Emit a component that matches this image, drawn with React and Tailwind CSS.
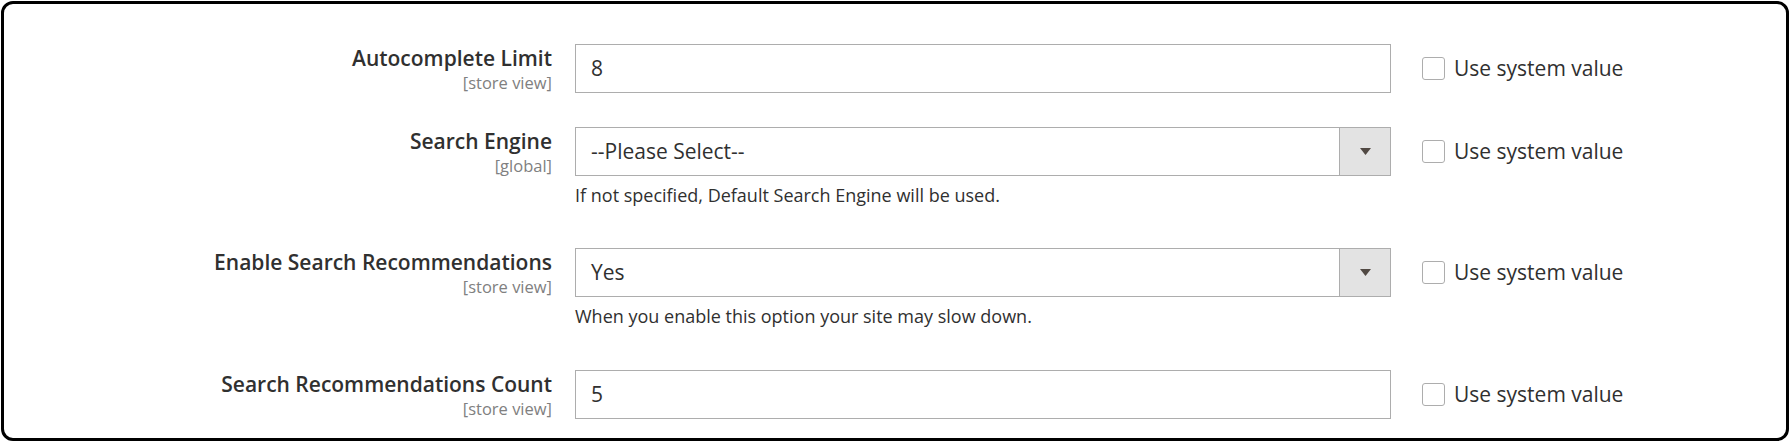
import React from 'react';

const rows = [
    { label: 'Autocomplete Limit', scope: '[store view]', type: 'input', value: '8', gap: 'mb-[34px]' },
    { label: 'Search Engine', scope: '[global]', type: 'select', value: '--Please Select--', note: 'If not specified, Default Search Engine will be used.', gap: 'mb-[41px]' },
    { label: 'Enable Search Recommendations', scope: '[store view]', type: 'select', value: 'Yes', note: 'When you enable this option your site may slow down.', gap: 'mb-[42px]' },
    { label: 'Search Recommendations Count', scope: '[store view]', type: 'input', value: '5', gap: '' },
];

const Field = ({ row }) => {
    if (row.type === 'select') {
        return (
            <div className="flex h-[49px] border border-[#adadad] bg-white">
                <div className="flex-1 flex items-center pl-[15px] text-[21px] text-[#303030]">{row.value}</div>
                <div className="w-[51px] flex items-center justify-center bg-[#e3e3e3] border-l border-[#adadad]">
                    <svg width="11" height="7" viewBox="0 0 11 7">
                        <polygon points="0,0 11,0 5.5,7" fill="#514943" />
                    </svg>
                </div>
            </div>
        );
    }
    return (
        <div className="flex items-center h-[49px] border border-[#adadad] bg-white pl-[15px] text-[21px] text-[#303030]">
            {row.value}
        </div>
    );
};

const Row = ({ row }) => (
    <div className={`flex items-start ${row.gap}`}>
        <div className="w-[548px] text-right pt-[2px]">
            <div className="text-[21px] leading-[24px] font-semibold text-[#303030]">{row.label}</div>
            <div className="mt-[4px] text-[16.5px] leading-[18px] text-[#808080]">{row.scope}</div>
        </div>
        <div className="ml-[23px] w-[816px]">
            <Field row={row} />
            {row.note && (
                <div className="mt-[7px] text-[18px] leading-[24px] text-[#303030]">{row.note}</div>
            )}
        </div>
        <div className="ml-[31px] h-[49px] flex items-center gap-[9px]">
            <div className="w-[23px] h-[23px] border border-[#adadad] rounded-[3px] bg-white" />
            <span className="text-[21px] text-[#303030]">Use system value</span>
        </div>
    </div>
);

export default function App() {
    return (
        <div className="w-[1792px] h-[442px] bg-white pt-px pl-px pr-[3px] pb-px" style={{ fontFamily: '"Open Sans", sans-serif' }}>
            <div className="h-full border-[3px] border-black rounded-[12px] pt-[40px]">
                {rows.map((row) => (
                    <Row key={row.label} row={row} />
                ))}
            </div>
        </div>
    );
}
